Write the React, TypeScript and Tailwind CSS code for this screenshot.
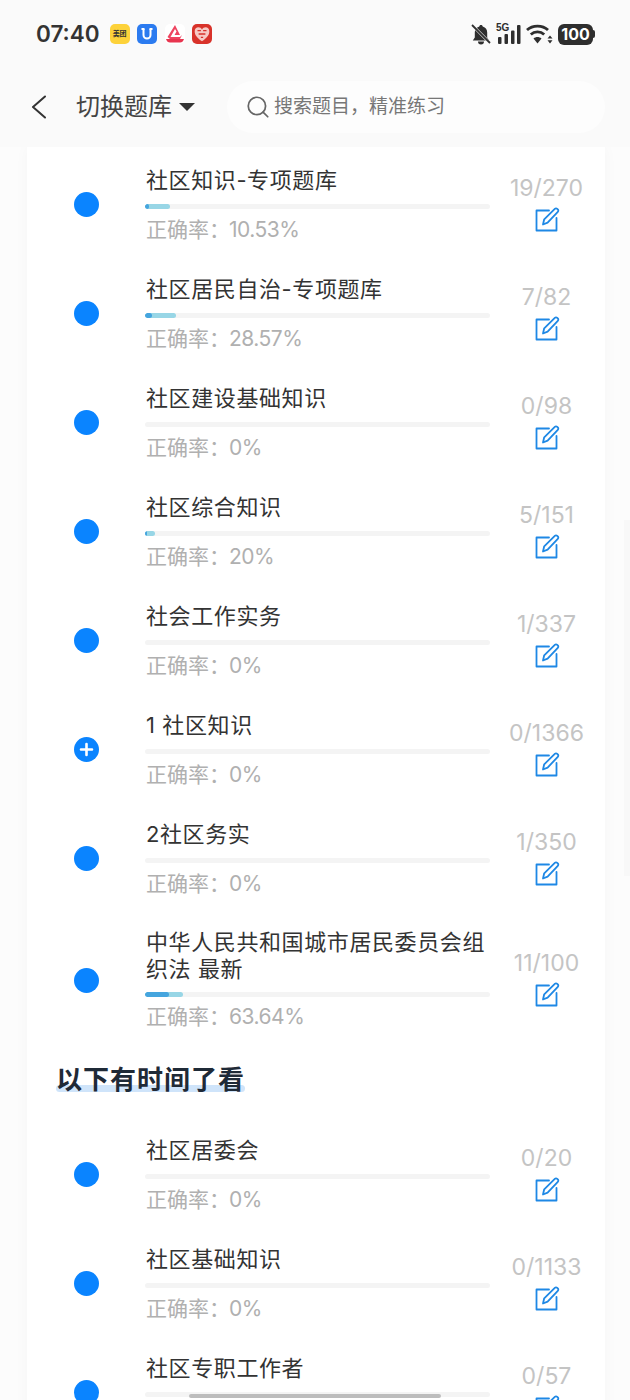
import React from "react";
import { Search } from "lucide-react";

type Row = {
  title: React.ReactNode;
  rate: string;
  count: string;
  bar?: { dark: number; light: number };
  plus?: boolean;
  tall?: boolean;
};

const TOP_ROWS: Row[] = [
  { title: "社区知识-专项题库", rate: "10.53%", count: "19/270", bar: { dark: 4, light: 25 } },
  { title: "社区居民自治-专项题库", rate: "28.57%", count: "7/82", bar: { dark: 7, light: 31 } },
  { title: "社区建设基础知识", rate: "0%", count: "0/98" },
  { title: "社区综合知识", rate: "20%", count: "5/151", bar: { dark: 2, light: 10 } },
  { title: "社会工作实务", rate: "0%", count: "1/337" },
  { title: "1 社区知识", rate: "0%", count: "0/1366", plus: true },
  { title: "2社区务实", rate: "0%", count: "1/350" },
  { title: "中华人民共和国城市居民委员会组织法 最新", rate: "63.64%", count: "11/100", bar: { dark: 24, light: 38 }, tall: true },
];

const BOTTOM_ROWS: Row[] = [
  { title: "社区居委会", rate: "0%", count: "0/20" },
  { title: "社区基础知识", rate: "0%", count: "0/1133" },
  { title: "社区专职工作者", rate: "0%", count: "0/57" },
];

const EditIcon = () => (
  <svg width="25" height="25" viewBox="0 0 25 25" fill="none" stroke="#1e88e5" strokeWidth="1.8" strokeLinejoin="round" strokeLinecap="round">
    <path d="M14 3.5H1.5V23.5H21.5V11" />
    <path d="M8 17.5l1.2-5.2L19.8 1.8c.7-.7 1.7-.7 2.4 0l.6.6c.7.7.7 1.7 0 2.4L12.6 15.6z" />
  </svg>
);

const BackIcon = () => (
  <svg width="15" height="24" viewBox="0 0 15 24" fill="none" stroke="#333" strokeWidth="2" strokeLinecap="round" strokeLinejoin="round">
    <path d="M14 1.500L2 12l12 10.500" />
  </svg>
);

const MuteBell = () => (
  <svg width="20" height="21" viewBox="0 0 20 21" fill="#2e2e2e">
    <path d="M10 1c-1 0-1.700.7-1.700 1.600C5.200 3.400 3.800 5.800 3.800 8.500V13.500L1.800 16.500h16.400l-2-3V8.500c0-2.700-1.400-5.100-4.500-5.900C11.700 1.700 11 1 10 1z" />
    <path d="M7 17.500h6a3 3 0 0 1-6 0z" />
    <path d="M1 1l18 18" stroke="#fafafa" strokeWidth="3" />
    <path d="M1 1l18 18" stroke="#2e2e2e" strokeWidth="1.800" />
  </svg>
);

const Signal = () => (
  <div className="relative h-5 w-[25px]">
    <span className="absolute left-[0px] top-[-2px] font-['Liberation_Sans',sans-serif] text-[10px] font-bold leading-[12px] text-[#2e2e2e]">5G</span>
    <svg className="absolute left-0 top-0" width="25" height="20" viewBox="0 0 25 20" fill="#2e2e2e">
      <rect x="2" y="13" width="3.500" height="7" rx="1" />
      <rect x="8.500" y="10" width="3.500" height="10" rx="1" />
      <rect x="15" y="6.500" width="3.500" height="13.500" rx="1" />
      <rect x="21" y="1" width="3.500" height="19" rx="1" />
    </svg>
  </div>
);

const Wifi = () => (
  <svg width="27" height="20" viewBox="0 0 27 20" fill="none" stroke="#2e2e2e" strokeWidth="2.800">
    <path d="M1 6C6.500 .8 16.500 .8 22 6" />
    <path d="M4.800 10.500C8.500 7 14.500 7 18.200 10.500" />
    <path d="M11.500 19.500L7.500 14.500c2.300-2 5.700-2 8 0z" fill="#2e2e2e" stroke="none" />
    <path d="M24 11.500l2.500 3h-5zM24 19.500l2.500-3.300h-5z" fill="#2e2e2e" stroke="none" />
  </svg>
);

const Battery = () => (
  <div className="flex items-center">
    <div className="flex h-[21px] w-[35px] items-center justify-center rounded-[6px] bg-[#2e2e2e] font-['Inter',sans-serif] text-[16px] font-bold text-white">
      100
    </div>
    <div className="h-2 w-[2px] rounded-r-sm bg-[#2e2e2e]" />
  </div>
);

const AppIcons = () => (
  <div className="flex items-center gap-[7.5px]">
    <div className="flex h-5 w-5 items-center justify-center rounded-[5px] bg-[#fdd23a] text-[7px] font-bold text-[#333]">美团</div>
    <div className="flex h-5 w-5 items-center justify-center rounded-[5px] bg-[#2b7bf0]">
      <svg width="14" height="14" viewBox="0 0 14 14" fill="none" stroke="#fff" strokeWidth="2">
        <path d="M3.500 2v6a3.500 3.500 0 0 0 7 0V2" />
        <path d="M1.500 2h3M9.500 2h3" />
      </svg>
    </div>
    <div className="flex h-5 w-5 items-center justify-center rounded-[5px] bg-white">
      <svg width="20" height="20" viewBox="0 0 20 20">
        <path d="M10 1l5 10H9.500l2-3.500L10 5 5.500 13h9.500L17 11l-2 4H5L2.500 13z" fill="#ee4460" />
        <path d="M1 15h18c-.8 2.500-2 3.500-4 3.500H5c-2 0-3.200-1-4-3.500z" fill="#e8354f" />
      </svg>
    </div>
    <div className="flex h-5 w-5 items-center justify-center rounded-[5px] bg-[#d8322a]">
      <svg width="18" height="18" viewBox="0 0 16 16">
        <path d="M8 14.500C3 11 1.500 8.500 1.500 5.500 1.500 3.300 3 2 4.800 2 6.200 2 7.300 2.800 8 4c.7-1.200 1.800-2 3.200-2 1.800 0 3.300 1.300 3.300 3.500 0 3-1.500 5.500-6.500 9z" fill="#f7c9c4" />
        <path d="M4 5h3M9 5h3M5 8h6M7 11h2" stroke="#d8322a" strokeWidth="1.200" />
      </svg>
    </div>
  </div>
);

const Dot = ({ plus }: { plus?: boolean }) => (
  <div className="flex h-[25px] w-[25px] items-center justify-center rounded-full bg-[#0a84ff]">
    {plus && (
      <svg width="15" height="15" viewBox="0 0 15 15" stroke="#fff" strokeWidth="2.600" strokeLinecap="round">
        <path d="M7.500 2v11M2 7.500h11" />
      </svg>
    )}
  </div>
);

const RowItem = ({ row }: { row: Row }) => (
  <div className={`flex items-center ${row.tall ? "h-[135px]" : "h-[109px]"}`}>
    <div className="flex w-[118px] shrink-0 justify-center">
      <Dot plus={row.plus} />
    </div>
    <div className={`w-[345px] shrink-0 pt-[1px] ${row.tall ? "pb-[3px]" : ""}`}>
      <div className={`pl-[1px] text-[22px] tracking-[0.6px] text-[#333] ${row.tall ? "leading-[27px]" : "whitespace-nowrap leading-[26px]"}`}>{row.title}</div>
      <div className={`h-[5px] overflow-hidden rounded-full bg-[#f4f4f4] ${row.tall ? "mt-[9px]" : "mt-[11px]"}`}>
        {row.bar && (
          <div className="relative h-full rounded-full bg-[#98d6e6]" style={{ width: row.bar.light }}>
            <div className="absolute left-0 top-0 h-full rounded-full bg-[#45a5de]" style={{ width: row.bar.dark }} />
          </div>
        )}
      </div>
      <div className={`pl-[1px] text-[21px] leading-[26px] text-[#b0b0b0] ${row.tall ? "mt-[7px]" : "mt-[8px]"}`}>
        正确率：<span className="ml-[-1px] tracking-[-0.5px]">{row.rate}</span>
      </div>
    </div>
    <div className={`flex flex-1 flex-col items-center pr-[2px] ${row.tall ? "pb-[5px]" : "pb-[3px]"}`}>
      <div className="text-[23px] leading-[28px] text-[#c4c4c4]">{row.count}</div>
      <div className="mt-[5px] ml-[1px] h-[25px]">
        <EditIcon />
      </div>
    </div>
  </div>
);

export default function App() {
  return (
    <div className="relative h-[1400px] w-[630px] overflow-hidden bg-[#fcfcfc] font-['Inter','Noto_Sans_CJK_SC',sans-serif]">
      <header className="relative z-10 h-[147px] bg-[#fafafa]">
        <div className="flex h-[68px] items-center justify-between pl-[36px] pr-[35px]">
          <div className="flex items-center gap-[10px]">
            <span className="text-[22.5px] font-semibold text-[#333]">07:40</span>
            <AppIcons />
          </div>
          <div className="flex items-center gap-[5px]">
            <MuteBell />
            <Signal />
            <Wifi />
            <Battery />
          </div>
        </div>
        <div className="flex h-[78px] items-center pl-[31px]">
          <BackIcon />
          <div className="ml-[30px] text-[24px] leading-[30px] text-[#444]">切换题库</div>
          <div className="ml-[7px] h-0 w-0 border-x-[8px] border-t-[8px] border-x-transparent border-t-[#333]" />
          <div className="ml-[32px] flex h-[52px] w-[378px] items-center rounded-full bg-[#fdfdfd] pl-[18px]">
            <Search className="h-[26px] w-[26px] text-[#666]" strokeWidth={1.600} />
            <span className="ml-[3px] text-[19px] text-[#777]">搜索题目，精准练习</span>
          </div>
        </div>
      </header>

      <main className="ml-[27px] w-[578px] bg-white shadow-[0_0_14px_rgba(0,0,0,0.03)]">
        <div className="pt-[3px]">
          {TOP_ROWS.map((row, i) => (
            <RowItem key={i} row={row} />
          ))}
        </div>
        <div className="pl-[29px] pt-[16px] pb-[24px]">
          <div className="relative inline-block">
            <div className="absolute bottom-[4px] left-0 h-[7px] w-full rounded-full bg-[#cfe4fa]" />
            <div className="relative text-[26px] font-bold leading-[32px] tracking-[1px] text-[#1f2a37]">以下有时间了看</div>
          </div>
        </div>
        {BOTTOM_ROWS.map((row, i) => (
          <RowItem key={i} row={row} />
        ))}
      </main>

      {/* faint edge of the next panel */}
      <div className="absolute left-[624px] top-[520px] h-[356px] w-[6px] bg-[#f8f8f8]" />
      <div className="absolute bottom-[2px] left-[189px] h-[4px] w-[252px] rounded-full bg-[#bdbdbd]" />
    </div>
  );
}
